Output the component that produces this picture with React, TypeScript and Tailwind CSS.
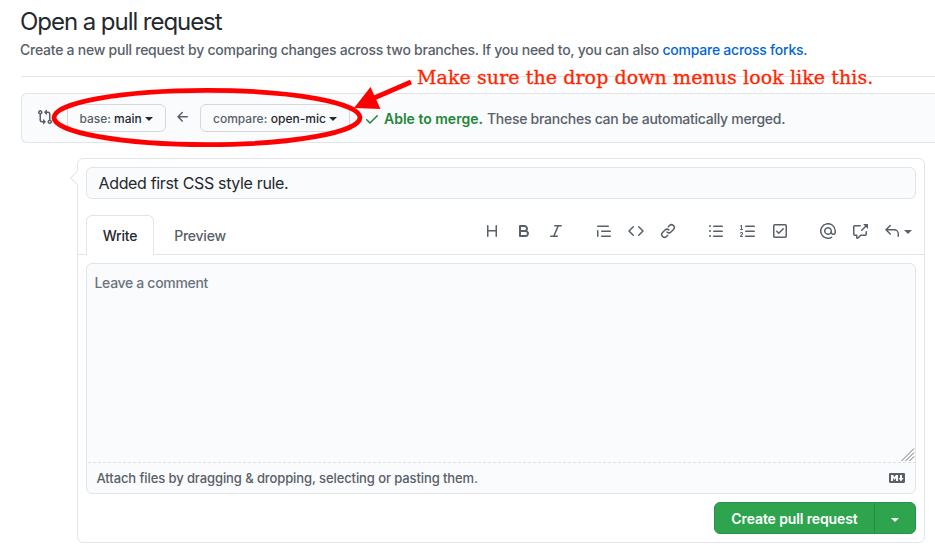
import type { ReactNode } from "react";

const paths = {
  compare:
    "M9.573.677L7.177 3.073a.25.25 0 000 .354l2.396 2.396A.25.25 0 0010 5.646V4h1a1 1 0 011 1v5.628a2.251 2.251 0 101.5 0V5A2.5 2.5 0 0011 2.5h-1V.854a.25.25 0 00-.427-.177zM6 12v-1.646a.25.25 0 01.427-.177l2.396 2.396a.25.25 0 010 .354l-2.396 2.396A.25.25 0 016 15.146V13.5H5A2.5 2.5 0 012.5 11V5.372a2.25 2.25 0 111.5 0V11a1 1 0 001 1h1zm6.75 0a.75.75 0 100 1.5.75.75 0 000-1.5zM4 3.25a.75.75 0 11-1.5 0 .75.75 0 011.5 0z",
  heading:
    "M3.75 2a.75.75 0 01.75.75V7h7V2.75a.75.75 0 011.5 0v10.5a.75.75 0 01-1.5 0V8.5h-7v4.75a.75.75 0 01-1.5 0V2.75A.75.75 0 013.75 2z",
  bold: "M4 2a1 1 0 00-1 1v10a1 1 0 001 1h5.5a3.5 3.5 0 001.852-6.47A3.5 3.5 0 008.5 2H4zm4.5 5a1.5 1.5 0 100-3H5v3h3.5zM5 9v3h4.5a1.5 1.5 0 000-3H5z",
  italic:
    "M6 2.75A.75.75 0 016.75 2h6.5a.75.75 0 010 1.5h-2.505l-3.858 9H9.25a.75.75 0 010 1.5h-6.5a.75.75 0 010-1.5h2.505l3.858-9H6.75A.75.75 0 016 2.75z",
  quote:
    "M1.75 2.5a.75.75 0 000 1.5h10.5a.75.75 0 000-1.5H1.75zm4 5a.75.75 0 000 1.5h8.5a.75.75 0 000-1.5h-8.5zm0 5a.75.75 0 000 1.5h8.5a.75.75 0 000-1.5h-8.5zM2.5 7.75a.75.75 0 00-1.5 0v5.5a.75.75 0 001.5 0v-5.5z",
  code: "M4.72 3.22a.75.75 0 011.06 1.06L2.06 8l3.72 3.72a.75.75 0 11-1.06 1.06L.47 8.53a.75.75 0 010-1.06l4.25-4.25zm6.56 0a.75.75 0 10-1.06 1.06L13.94 8l-3.72 3.72a.75.75 0 101.06 1.06l4.25-4.25a.75.75 0 000-1.06l-4.25-4.25z",
  link: "M7.775 3.275a.75.75 0 001.06 1.06l1.25-1.25a2 2 0 112.83 2.83l-2.5 2.5a2 2 0 01-2.83 0 .75.75 0 00-1.06 1.06 3.5 3.5 0 004.95 0l2.5-2.5a3.5 3.5 0 00-4.95-4.95l-1.25 1.25zm-4.69 9.64a2 2 0 010-2.83l2.5-2.5a2 2 0 012.83 0 .75.75 0 001.06-1.06 3.5 3.5 0 00-4.95 0l-2.5 2.5a3.5 3.5 0 004.95 4.95l1.25-1.25a.75.75 0 00-1.06-1.06l-1.25 1.25a2 2 0 01-2.83 0z",
  bullets:
    "M2 4a1 1 0 100-2 1 1 0 000 2zm3.75-1.5a.75.75 0 000 1.5h8.5a.75.75 0 000-1.5h-8.5zm0 5a.75.75 0 000 1.5h8.5a.75.75 0 000-1.5h-8.5zm0 5a.75.75 0 000 1.5h8.5a.75.75 0 000-1.5h-8.5zM3 8a1 1 0 11-2 0 1 1 0 012 0zm-1 6a1 1 0 100-2 1 1 0 000 2z",
  numbers:
    "M2.003 2.5a.5.5 0 00-.723-.447l-1.003.5a.5.5 0 00.446.895l.28-.14V6H.5a.5.5 0 000 1h2.006a.5.5 0 100-1h-.503V2.5zM5 3.25a.75.75 0 01.75-.75h8.5a.75.75 0 010 1.5h-8.5A.75.75 0 015 3.25zm0 5a.75.75 0 01.75-.75h8.5a.75.75 0 010 1.5h-8.5A.75.75 0 015 8.25zm0 5a.75.75 0 01.75-.75h8.5a.75.75 0 010 1.5h-8.5a.75.75 0 01-.75-.75zM.924 10.32l.003-.004a.851.851 0 01.144-.153A.66.66 0 011.5 10c.195 0 .306.068.374.146a.57.57 0 01.128.376c0 .453-.269.682-.8 1.078l-.035.025C.692 11.98 0 12.495 0 13.5a.5.5 0 00.5.5h2.003a.5.5 0 000-1H1.146c.132-.197.351-.372.654-.597l.047-.035c.47-.35 1.156-.858 1.156-1.845 0-.365-.118-.744-.377-1.038-.268-.303-.658-.484-1.126-.484-.48 0-.84.202-1.068.392a1.858 1.858 0 00-.348.384l-.007.011-.002.004-.001.002-.001.001a.5.5 0 00.851.525z",
  task: "M2.5 2.75a.25.25 0 01.25-.25h10.5a.25.25 0 01.25.25v10.5a.25.25 0 01-.25.25H2.75a.25.25 0 01-.25-.25V2.75zM2.75 1A1.75 1.75 0 001 2.75v10.5c0 .966.784 1.75 1.75 1.75h10.5A1.75 1.75 0 0015 13.25V2.75A1.75 1.75 0 0013.25 1H2.75zm9.03 5.28a.75.75 0 00-1.06-1.06L6.75 9.19 5.28 7.72a.75.75 0 00-1.06 1.06l2 2a.75.75 0 001.06 0l4.5-4.5z",
  mention:
    "M4.75 2.37a6.5 6.5 0 006.5 11.26.75.75 0 01.75 1.298 8 8 0 113.994-7.273.754.754 0 01.006.095v1.5a2.75 2.75 0 01-5.072 1.475A4 4 0 1112 8v1.25a1.25 1.25 0 002.5 0V7.867a6.5 6.5 0 00-9.75-5.496V2.37zM10.5 8a2.5 2.5 0 10-5 0 2.5 2.5 0 005 0z",
  crossRef:
    "M16 1.25v4.146a.25.25 0 01-.427.177L14.03 4.03l-3.75 3.75a.75.75 0 11-1.06-1.06l3.75-3.75-1.543-1.543A.25.25 0 0111.604 1h4.146a.25.25 0 01.25.25zM2.75 3.5a.25.25 0 00-.25.25v7.5c0 .138.112.25.25.25h2a.75.75 0 01.75.75v2.19l2.72-2.72a.75.75 0 01.53-.22h4.5a.25.25 0 00.25-.25v-2.5a.75.75 0 111.5 0v2.5A1.75 1.75 0 0113.25 13H9.06l-2.573 2.573A1.457 1.457 0 014 14.543V13H2.75A1.75 1.75 0 011 11.25v-7.5C1 2.784 1.784 2 2.75 2h5.5a.75.75 0 010 1.5h-5.5z",
  reply:
    "M6.78 1.97a.75.75 0 010 1.06L3.81 6h6.44A4.75 4.75 0 0115 10.75v2.5a.75.75 0 01-1.5 0v-2.5a3.25 3.25 0 00-3.25-3.25H3.81l2.97 2.97a.75.75 0 11-1.06 1.06L1.47 7.28a.75.75 0 010-1.06l4.25-4.25a.75.75 0 011.06 0z",
  check:
    "M13.78 4.22a.75.75 0 010 1.06l-7.25 7.25a.75.75 0 01-1.06 0L2.22 9.28a.75.75 0 011.06-1.06L6 10.94l6.72-6.72a.75.75 0 011.06 0z",
  arrowLeft:
    "M7.78 12.53a.75.75 0 01-1.06 0L2.47 8.28a.75.75 0 010-1.06l4.25-4.25a.75.75 0 011.06 1.06L4.81 7h7.44a.75.75 0 010 1.5H4.81l2.97 2.97a.75.75 0 010 1.06z",
  markdown:
    "M14.85 3H1.15C.52 3 0 3.52 0 4.15v7.69C0 12.48.52 13 1.15 13h13.69c.64 0 1.15-.52 1.15-1.15v-7.7C16 3.52 15.48 3 14.85 3zM9 11H7V8L5.5 9.92 4 8v3H2V5h2l1.5 2L7 5h2v6zm2.99.5L9.5 8H11V5h2v3h1.5l-2.51 3.5z",
};

function Icon({ name, className = "" }: { name: keyof typeof paths; className?: string }) {
  return (
    <svg viewBox="0 0 16 16" className={`size-4 shrink-0 ${className}`} fill="currentColor" aria-hidden="true">
      <path fillRule="evenodd" d={paths[name]} />
    </svg>
  );
}

function Caret({ className = "" }: { className?: string }) {
  return (
    <svg viewBox="0 0 8 4" className={`h-1 w-2 shrink-0 ${className}`} fill="currentColor" aria-hidden="true">
      <path d="M0 0h8L4 4z" />
    </svg>
  );
}

function BranchButton({ className, children }: { className: string; children: ReactNode }) {
  return (
    <button
      className={`flex h-7 shrink-0 items-center whitespace-nowrap rounded-md border border-[#d5d8db] bg-[#fafbfc] pt-px text-xs font-medium text-[#24292e] ${className}`}
    >
      {children}
    </button>
  );
}

const toolGroups: (keyof typeof paths)[][] = [
  ["heading", "bold", "italic"],
  ["quote", "code", "link"],
  ["bullets", "numbers", "task"],
];

export default function App() {
  return (
    <div className="relative h-[548px] w-[935px] overflow-hidden bg-white font-['Inter',sans-serif] text-sm font-[450] text-[#24292e]">
      <header className="ml-[21px] flex h-[77px] flex-col border-b border-[#e1e4e8] pt-[6px]">
        <h1 className="-ml-px h-8 whitespace-nowrap text-2xl font-normal leading-8 tracking-[-1.05px]">Open a pull request</h1>
        <p className="-ml-px mt-[2px] h-5 whitespace-nowrap leading-5 tracking-[-0.243px] text-[#586069]">
          Create a new pull request by comparing changes across two branches. If you need to, you can also{" "}
          <a className="text-[#0366d6]">compare across forks</a>.
        </p>
      </header>

      <section className="ml-[21px] mt-4 flex h-[50px] items-center rounded-l-md border border-r-0 border-[#e1e4e8] bg-[#fafbfc] pl-[15px] text-[#586069]">
        <Icon name="compare" className="-mt-0.5" />
        <BranchButton className="ml-[14px] w-[99px] pl-[11.5px]">
          <span className="text-[#586069]">base:</span>
          <span className="ml-[3px]">main</span>
          <Caret className="ml-[3.5px]" />
        </BranchButton>
        <Icon name="arrowLeft" className="-mt-0.5 ml-[9px]" />
        <BranchButton className="ml-[9px] w-[150px] pl-3">
          <span className="text-[#586069]">compare:</span>
          <span className="ml-[3.5px]">open-mic</span>
          <Caret className="ml-[3.5px]" />
        </BranchButton>
        <Icon name="check" className="ml-[14px] mt-0.5 text-[#22863a]" />
        <p className="ml-1 whitespace-nowrap pt-0.5">
          <strong className="font-semibold text-[#22863a]">Able to merge.</strong>
          <span className="ml-1 tracking-[-0.26px]">These branches can be automatically merged.</span>
        </p>
      </section>

      <main className="relative ml-[77px] mt-[15px] flex h-[385px] w-[848px] flex-col rounded-md border border-[#e1e4e8] pt-2">
        <svg className="absolute -left-2 top-[11px] h-4 w-2" viewBox="0 0 8 16" aria-hidden="true">
          <path d="M8 0L.6 8 8 16z" fill="#fff" />
          <path d="M7.8 .8L.6 8l7.2 7.2" fill="none" stroke="#d8dce0" />
        </svg>
        <div className="mx-2 flex h-8 items-center rounded-md border border-[#e1e4e8] bg-[#fafbfc] pl-[11.5px] text-base">
          <span className="whitespace-nowrap font-normal tracking-[-0.34px]">Added first CSS style rule.</span>
        </div>

        <div className="mt-4 flex h-10 border-b border-[#e1e4e8] pl-2">
          <div className="-mb-px flex h-10 w-[68px] items-center justify-center rounded-t-md border border-b-0 border-[#e1e4e8] bg-white pt-px tracking-[-0.2px]">
            Write
          </div>
          <div className="flex w-[92px] items-center justify-center pt-0.5 tracking-[-0.25px] text-[#586069]">Preview</div>
          <div className="ml-auto mr-3 flex h-8 items-center gap-8 text-[#586069]">
            {toolGroups.map((group, i) => (
              <div key={i} className="flex gap-4">
                {group.map((name) => (
                  <Icon key={name} name={name} />
                ))}
              </div>
            ))}
            <div className="flex items-center gap-4">
              <Icon name="mention" />
              <Icon name="crossRef" />
              <div className="flex items-center gap-1">
                <Icon name="reply" />
                <Caret className="mt-0.5" />
              </div>
            </div>
          </div>
        </div>

        <div className="mx-2 mt-2 flex h-[231px] flex-col rounded-md border border-[#e1e4e8] bg-[#fafbfc]">
          <div className="relative h-[198px] pl-[7.5px] pt-[9px] leading-5 tracking-[-0.32px] text-[#6a737d]">
            Leave a comment
            <svg className="absolute bottom-0 right-0 size-[14px]" viewBox="0 0 14 14" stroke="#777" strokeWidth="1" aria-hidden="true">
              <path d="M.5 13L13 .5M4.500 13L13 4.5M8.500 13L13 8.5" fill="none" />
            </svg>
          </div>
          <svg className="h-px w-full shrink-0" aria-hidden="true">
            <line x1="1" y1=".5" x2="828" y2=".5" stroke="#dfe2e5" strokeDasharray="3 2" />
          </svg>
          <div className="flex h-[30px] items-center justify-between pl-[9.5px] pr-[10px] text-[13px] text-[#586069]">
            <span className="whitespace-nowrap tracking-[-0.1px]">Attach files by dragging &amp; dropping, selecting or pasting them.</span>
            <Icon name="markdown" />
          </div>
        </div>

        <div className="mr-2 mt-2 flex h-8 w-[202px] self-end overflow-hidden rounded-md border border-[#2a9147] bg-[#2ea44f] text-white">
          <button className="w-[160px] whitespace-nowrap border-r border-[#27893f] pt-0.5 font-semibold tracking-[-0.12px]">Create pull request</button>
          <button className="flex flex-1 items-center justify-center">
            <Caret className="mt-1" />
          </button>
        </div>
      </main>

      <svg className="absolute left-0 top-0 h-[160px] w-[420px]" viewBox="0 0 420 160" aria-hidden="true">
        <ellipse cx="207" cy="117.5" rx="153" ry="27.200" fill="none" stroke="#f00" strokeWidth="4.800" />
        <path d="M411 82L374 98" stroke="#f00" strokeWidth="4.800" />
        <path d="M354 108L370.500 87L380.500 109z" fill="#f00" />
      </svg>
      <p className="absolute left-[417px] top-[65px] whitespace-nowrap font-['DejaVu_Serif',serif] text-[19px] font-normal leading-6 tracking-[0.08px] text-[#ff2600] [-webkit-text-stroke:0.3px_#ff2600]">
        Make sure the drop down menus look like this.
      </p>
    </div>
  );
}
